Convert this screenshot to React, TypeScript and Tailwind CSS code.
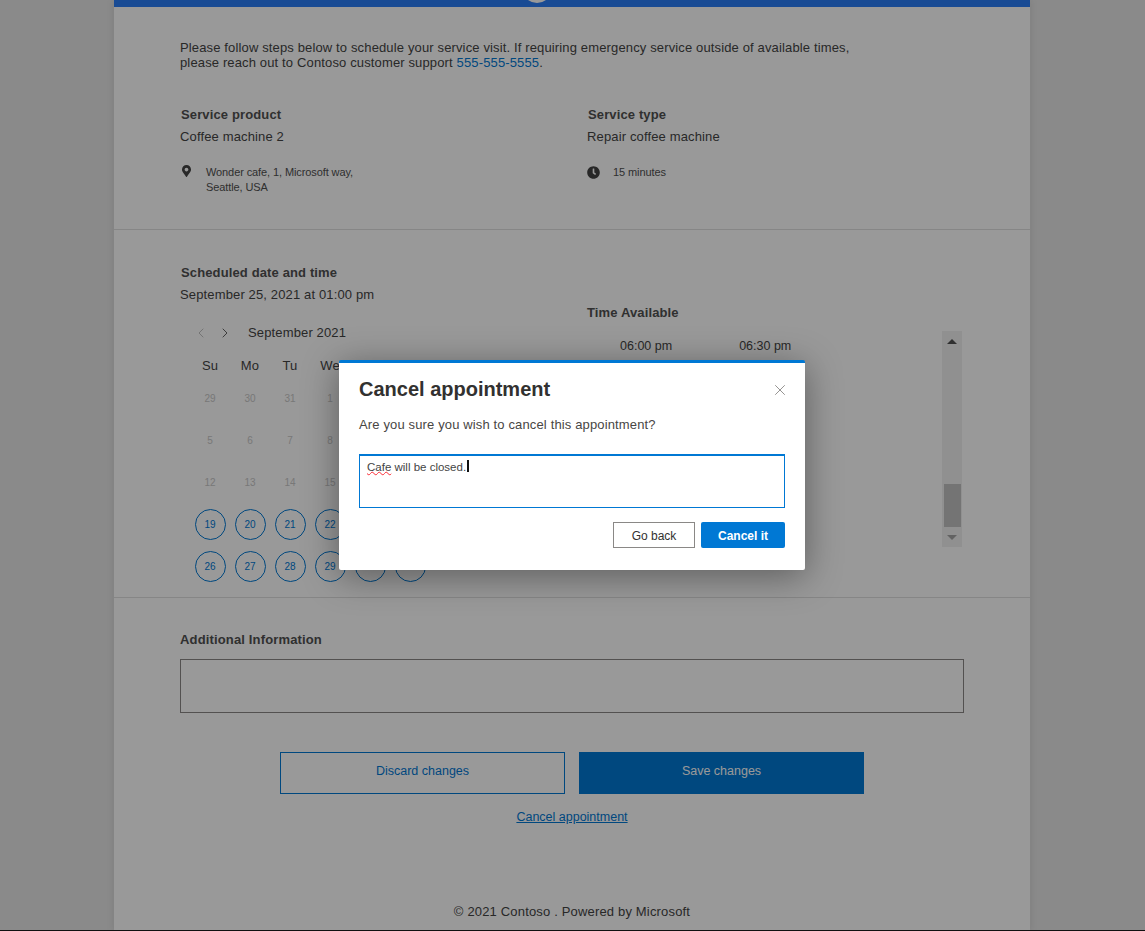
import { ChevronLeft, ChevronRight, X } from 'lucide-react';
import { FaClock, FaMapMarkerAlt } from 'react-icons/fa';

const weekDays = ['Su', 'Mo', 'Tu', 'We', '', '', ''];

// Days from the 4th column on sit behind the dialog, so only their cells are kept
const calendarRows = [
    [29, 30, 31, 1],
    [5, 6, 7, 8],
    [12, 13, 14, 15],
    [19, 20, 21, 22],
    [26, 27, 28, 29, null, null],
];

function Calendar() {
    return (
        <div>
            <div className="mt-[18px] flex h-5 items-center">
                <ChevronLeft className="ml-[13px] h-4 w-4 text-[#b4b4b4]" strokeWidth={1.25} />
                <ChevronRight className="ml-2 h-4 w-4 text-[#444]" strokeWidth={1.25} />
                <span className="ml-[15px] text-[13px] tracking-[0.14px] text-[#444]">September 2021</span>
            </div>
            <div className="ml-[10px] mt-[13px] grid w-[280px] grid-cols-7">
                {weekDays.map((day, i) => (
                    <div key={i} className="text-center text-[13px] leading-5 tracking-[0.14px] text-[#444]">{day}</div>
                ))}
            </div>
            <div className="ml-[10px] mt-[1px] w-[280px]">
                {calendarRows.map((row, r) => (
                    <div key={r} className="grid h-[42px] grid-cols-7">
                        {row.map((day, i) => (
                            <div key={i} className="flex items-center justify-center">
                                {r >= 3 ? (
                                    <span className="flex h-[31px] w-[31px] items-center justify-center rounded-full border border-[#0078d4] text-[10px] text-[#0078d4]">{day}</span>
                                ) : (
                                    <span className="text-[10px] text-[#c8c8c8]">{day}</span>
                                )}
                            </div>
                        ))}
                    </div>
                ))}
            </div>
        </div>
    );
}

function CancelDialog() {
    return (
        <div className="absolute left-[339px] top-[360px] h-[210px] w-[466px] rounded-[2px] border-t-[3px] border-[#0078d4] bg-white px-5 shadow-[0_6px_36px_rgba(0,0,0,0.4)]">
            <div className="mt-[13px] flex h-[26px] items-center justify-between">
                <h2 className="text-xl font-bold leading-[26px] text-[#323130]">Cancel appointment</h2>
                <X className="mr-[-4px] mt-[2px] h-[18px] w-[18px] text-[#8a8886]" strokeWidth={1.2} />
            </div>
            <p className="mt-[13px] text-[13px] leading-5 tracking-[0.14px] text-[#484644]">Are you sure you wish to cancel this appointment?</p>
            <div className="mt-[19px] h-[54px] w-[426px] border border-t-2 border-[#0078d4] px-[7px] pt-[1px] text-[11.5px] leading-5 text-[#444]">
                <span className="underline decoration-red-500 decoration-wavy decoration-1 underline-offset-0">Cafe</span> will be closed.
                <span className="ml-[1px] inline-block h-[12px] w-[2px] translate-y-[1px] bg-[#111]"></span>
            </div>
            <div className="mt-[14px] flex justify-end gap-[6px]">
                <button className="h-[26px] w-[82px] border border-[#8a8886] bg-white pt-px text-xs text-[#323130]">Go back</button>
                <button className="h-[26px] w-[84px] rounded-[2px] bg-[#0078d4] pt-px text-xs font-bold text-white">Cancel it</button>
            </div>
        </div>
    );
}

export default function App() {
    return (
        <div className="relative h-[931px] overflow-hidden bg-[#e6e6e6] font-['Liberation_Sans',Arial,sans-serif]">
            <div className="ml-[114px] h-full w-[916px] bg-white shadow-[0_0_8px_rgba(0,0,0,0.1)]">
                {/* Header strip, only its bottom edge is in view */}
                <div className="relative h-[7px] overflow-hidden bg-[#2b7df7]">
                    <div className="absolute left-[408px] top-[-27px] h-[30px] w-[30px] rounded-full bg-white"></div>
                </div>

                {/* Service summary */}
                <div className="h-[223px] border-b border-[#e0e0e0] px-[66px] pt-[33px]">
                    <p className="text-[13px] leading-[15px] tracking-[0.14px] text-[#444]">
                        Please follow steps below to schedule your service visit. If requiring emergency service outside of available times,<br />
                        please reach out to Contoso customer support <span className="text-[#0078d4]">555-555-5555</span>.
                    </p>
                    <div className="mt-[35px] grid grid-cols-[407px_1fr]">
                        <div>
                            <div className="pl-px text-[13px] font-bold leading-5 tracking-[0.13px] text-[#505050]">Service product</div>
                            <div className="mt-[2px] text-[13px] leading-5 tracking-[0.14px] text-[#444]">Coffee machine 2</div>
                            <div className="mt-[18px] flex">
                                <FaMapMarkerAlt className="ml-[2px] h-[12px] w-[9px] text-[#444]" />
                                <div className="ml-[15px] text-[11px] leading-[15px] tracking-[-0.1px] text-[#505050]">Wonder cafe, 1, Microsoft way,<br />Seattle, USA</div>
                            </div>
                        </div>
                        <div>
                            <div className="pl-px text-[13px] font-bold leading-5 tracking-[0.13px] text-[#505050]">Service type</div>
                            <div className="mt-[2px] text-[13px] leading-5 tracking-[0.14px] text-[#444]">Repair coffee machine</div>
                            <div className="mt-[18px] flex items-center">
                                <FaClock className="h-[13px] w-[13px] text-[#444]" />
                                <div className="ml-[13px] text-[11px] leading-[15px] tracking-[-0.1px] text-[#505050]">15 minutes</div>
                            </div>
                        </div>
                    </div>
                </div>

                {/* Date and time picker */}
                <div className="grid h-[368px] grid-cols-[407px_1fr] border-b border-[#e0e0e0] pl-[66px] pt-[33px]">
                    <div>
                        <div className="pl-px text-[13px] font-bold leading-5 tracking-[0.13px] text-[#505050]">Scheduled date and time</div>
                        <div className="mt-[2px] text-[13px] leading-5 tracking-[0.14px] text-[#444]">September 25, 2021 at 01:00 pm</div>
                        <Calendar />
                    </div>
                    <div className="pt-[40px]">
                        <div className="text-[13px] font-bold leading-5 tracking-[0.13px] text-[#505050]">Time Available</div>
                        <div className="flex">
                            <div className="mt-[13px] flex h-5 text-[12.5px] leading-5 text-[#444]">
                                <span className="ml-[33px]">06:00 pm</span>
                                <span className="ml-[67px]">06:30 pm</span>
                            </div>
                            <div className="ml-[151px] mt-[8px] flex h-[216px] w-5 flex-col items-center justify-between bg-[#f1f1f1]">
                                <div className="mt-2 h-0 w-0 border-x-[5px] border-b-[5px] border-x-transparent border-b-[#505050]"></div>
                                <div className="flex w-full flex-col items-center">
                                    <div className="h-[43px] w-[17px] bg-[#c1c1c1]"></div>
                                    <div className="mb-[7px] mt-[8px] h-0 w-0 border-x-[5px] border-t-[5px] border-x-transparent border-t-[#a3a3a3]"></div>
                                </div>
                            </div>
                        </div>
                    </div>
                </div>

                {/* Notes and actions */}
                <div className="px-[66px] pt-[32px]">
                    <div className="text-[13px] font-bold leading-5 tracking-[0.15px] text-[#505050]">Additional Information</div>
                    <div className="mt-[9px] h-[54px] border border-[#8a8886]"></div>
                    <div className="mt-[39px] flex justify-center gap-[14px]">
                        <button className="h-[42px] w-[285px] border border-[#0078d4] pb-[3px] text-[12.5px] text-[#0078d4]">Discard changes</button>
                        <button className="h-[42px] w-[285px] bg-[#0078d4] pb-[3px] text-[12.5px] text-white">Save changes</button>
                    </div>
                    <div className="mt-[13px] text-center text-[12.5px] leading-5">
                        <a className="text-[#0078d4] underline">Cancel appointment</a>
                    </div>
                    <div className="mt-[75px] text-center text-[13px] leading-5 tracking-[0.17px] text-[#444]">© 2021 Contoso . Powered by Microsoft</div>
                </div>
            </div>

            {/* Modal backdrop */}
            <div className="absolute inset-0 border-b border-[#111] bg-black/40"></div>
            <CancelDialog />
        </div>
    );
}
